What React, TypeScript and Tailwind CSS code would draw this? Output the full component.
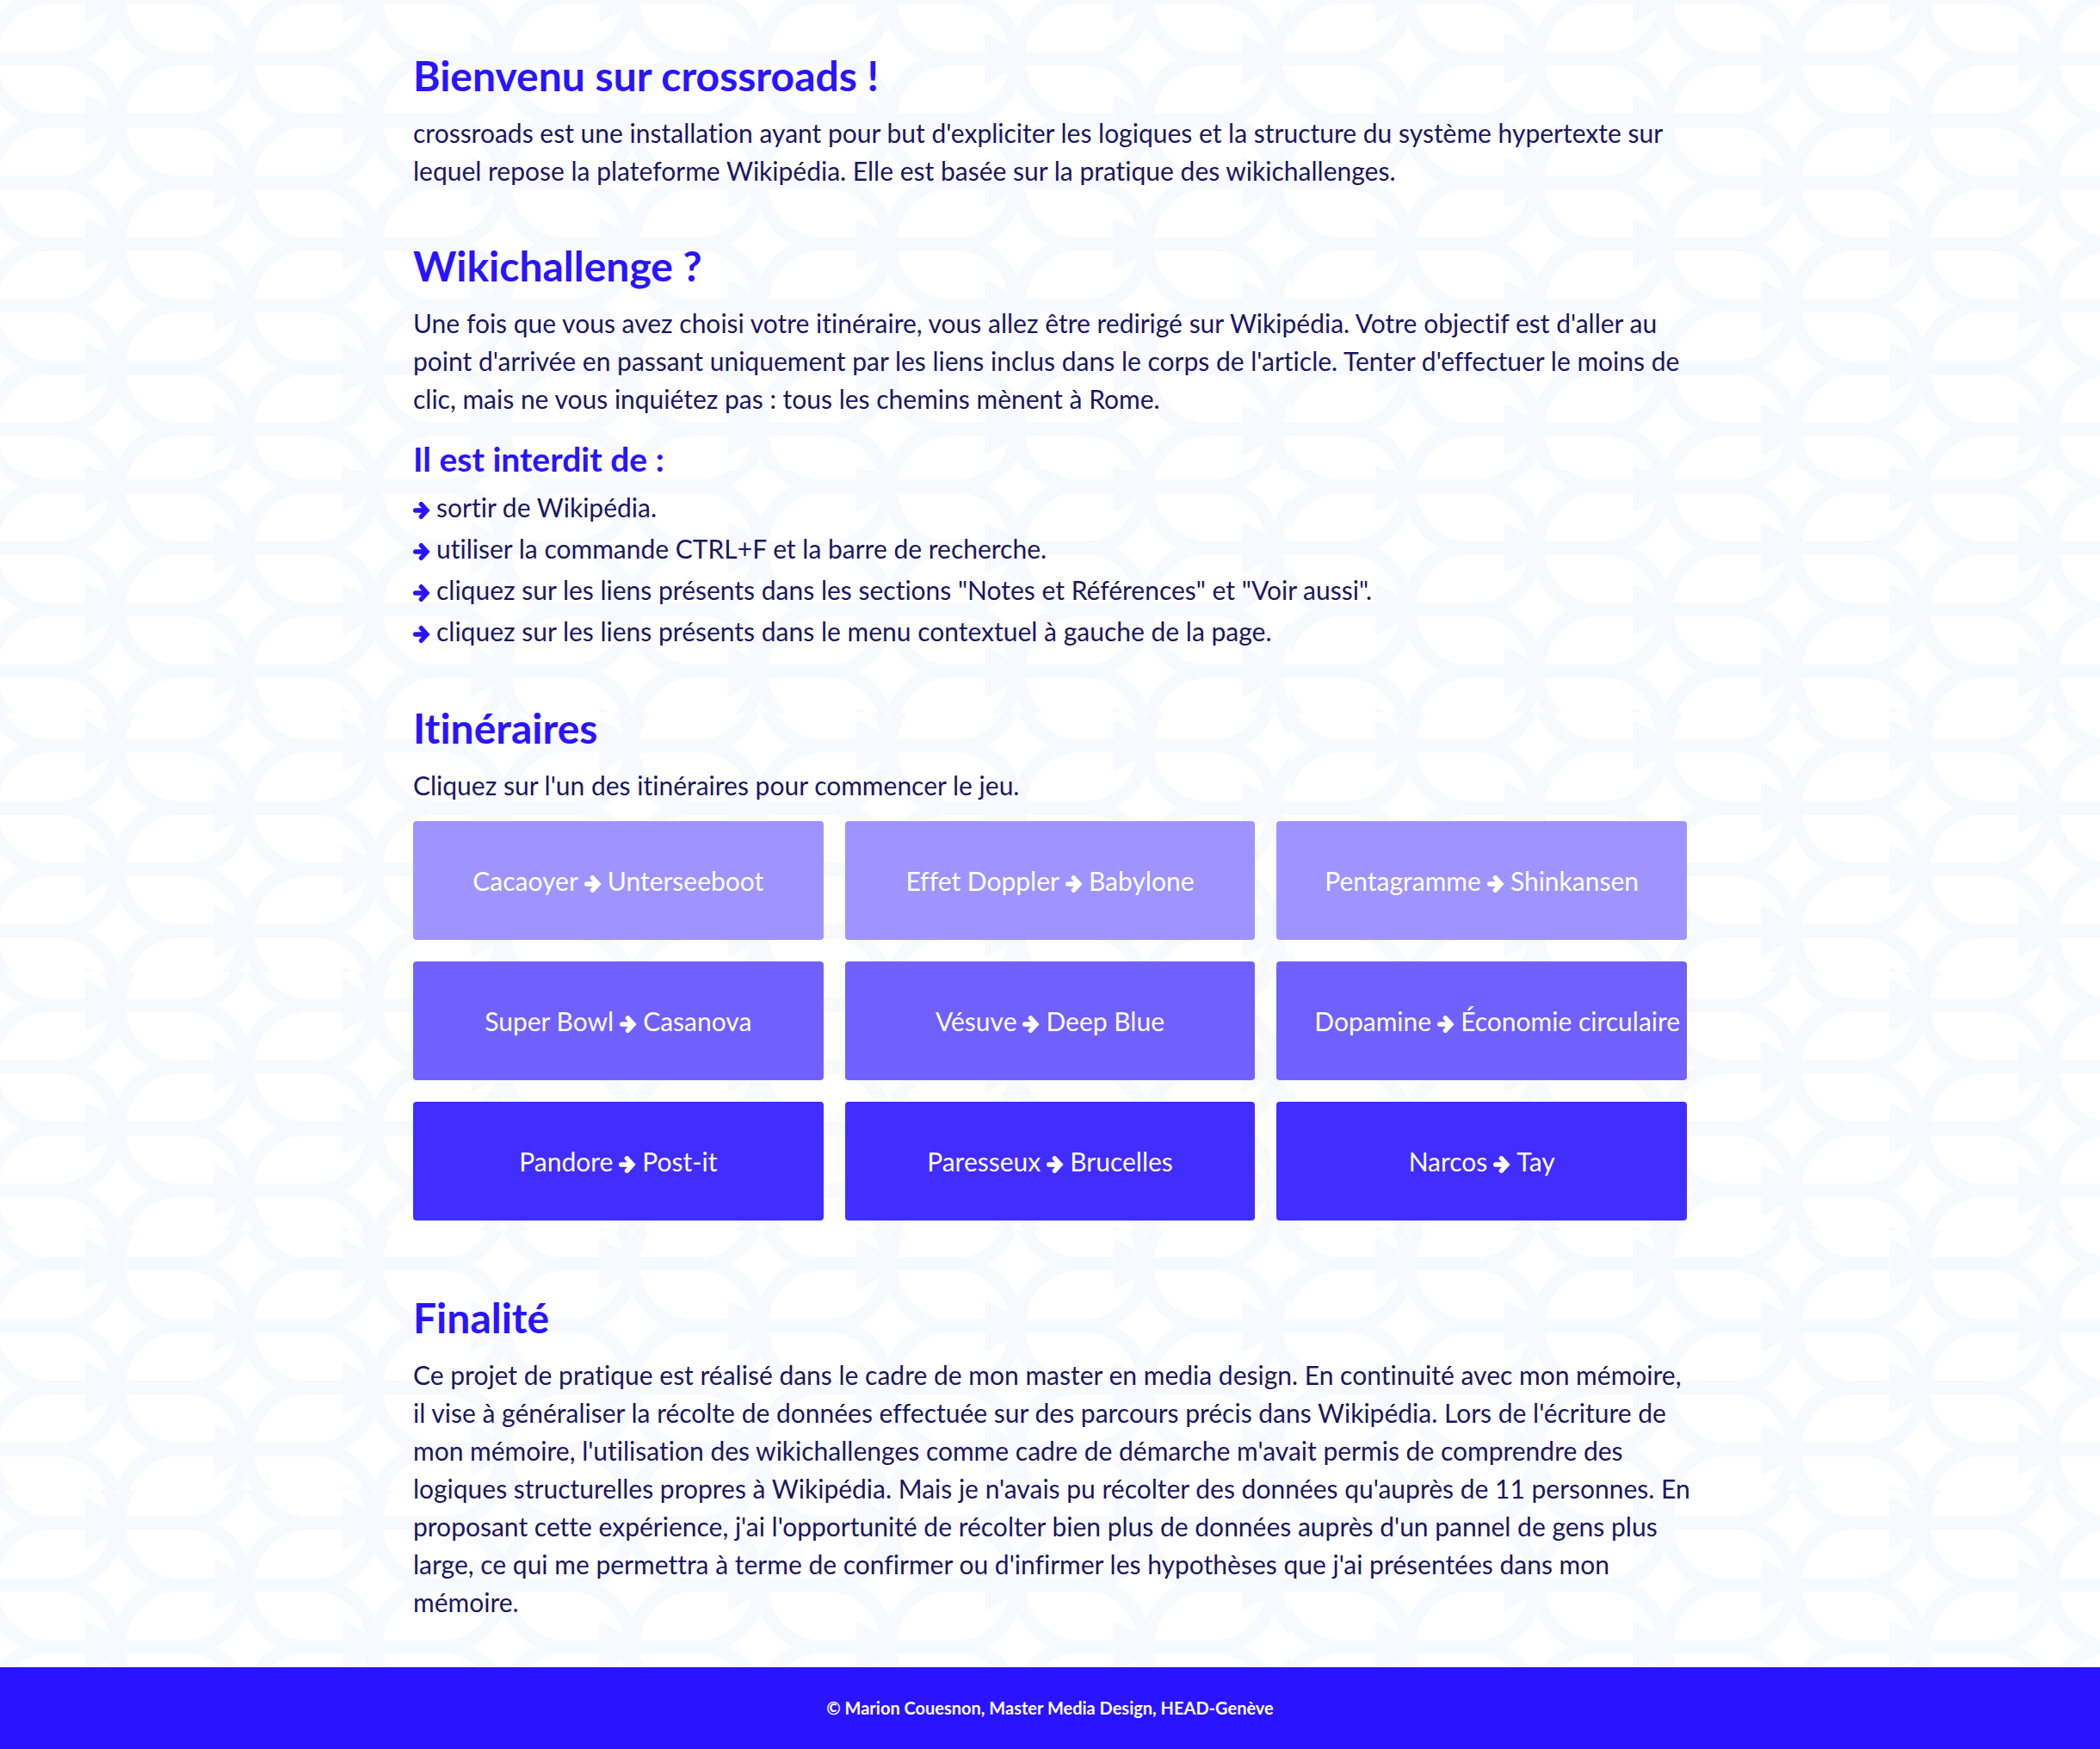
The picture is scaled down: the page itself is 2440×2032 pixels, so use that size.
import React from "react";

const UNIT_W = 298.67;
const UNIT_H = 143.6;

function Junction({ x, y }: { x: number; y: number }) {
  return (
    <g transform={`translate(${x} ${y})`}>
      <path
        fill="none"
        stroke="#f8f9ff"
        strokeWidth={16}
        d="M-80 0H80M1 0A70 72 0 0 1 71 -72M1 0A70 72 0 0 0 71 72M-1 0A70 72 0 0 0 -71 -72M-1 0A70 72 0 0 1 -71 72"
      />
      <path fill="#f8f9ff" d="M-38 -27Q-38 -30 -35 -29L18 0L-35 29Q-38 30 -38 27Z" />
    </g>
  );
}

function RailPattern({ id, x, y }: { id: string; x: number; y: number }) {
  return (
    <pattern id={id} x={x} y={y} width={UNIT_W} height={UNIT_H} patternUnits="userSpaceOnUse">
      <Junction x={0} y={0} />
      <Junction x={UNIT_W} y={0} />
      <Junction x={0} y={UNIT_H} />
      <Junction x={UNIT_W} y={UNIT_H} />
      <Junction x={UNIT_W / 2} y={UNIT_H / 2} />
    </pattern>
  );
}

const bands = [
  { top: 0, height: 546, origin: 140 },
  { top: 546, height: 282, origin: 564.7 },
  { top: 828, height: 301, origin: 866.6 },
  { top: 1129, height: 301, origin: 1167.6 },
  { top: 1430, height: 301, origin: 1468.6 },
  { top: 1731, height: 301, origin: 1769.6 },
];

function Background() {
  return (
    <svg className="absolute inset-0 h-full w-full" aria-hidden="true">
      <defs>
        {bands.map((b, i) => (
          <React.Fragment key={i}>
            <RailPattern id={`rail-a${i}`} x={137} y={b.origin} />
            <RailPattern id={`rail-b${i}`} x={143} y={b.origin} />
          </React.Fragment>
        ))}
      </defs>
      {bands.map((b, i) => (
        <React.Fragment key={i}>
          <rect x={0} y={b.top} width={1499} height={b.height} fill={`url(#rail-a${i})`} />
          <rect x={1499} y={b.top} width="100%" height={b.height} fill={`url(#rail-b${i})`} />
        </React.Fragment>
      ))}
    </svg>
  );
}

function Arrow() {
  return (
    <svg
      viewBox="0 0 20 20"
      className="inline-block h-5 w-5 align-[-2px]"
      fill="none"
      stroke="currentColor"
      strokeWidth={5.4}
      strokeLinecap="round"
      aria-hidden="true"
    >
      <path d="M2.7 10H14M9.4 2.7L16 10L9.4 17.3" />
    </svg>
  );
}

function Title({ children }: { children: React.ReactNode }) {
  return <h2 className="mb-[14px] text-[48px] leading-[60px] font-bold text-[#2a14ff]">{children}</h2>;
}

const rules = [
  "sortir de Wikipédia.",
  "utiliser la commande CTRL+F et la barre de recherche.",
  'cliquez sur les liens présents dans les sections "Notes et Références" et "Voir aussi".',
  "cliquez sur les liens présents dans le menu contextuel à gauche de la page.",
];

const routes = [
  { from: "Cacaoyer", to: "Unterseeboot", color: "bg-[#9f94ff]" },
  { from: "Effet Doppler", to: "Babylone", color: "bg-[#9f94ff]" },
  { from: "Pentagramme", to: "Shinkansen", color: "bg-[#9f94ff]" },
  { from: "Super Bowl", to: "Casanova", color: "bg-[#7061ff]" },
  { from: "Vésuve", to: "Deep Blue", color: "bg-[#7061ff]" },
  { from: "Dopamine", to: "Économie circulaire", color: "bg-[#7061ff]" },
  { from: "Pandore", to: "Post-it", color: "bg-[#412dff]" },
  { from: "Paresseux", to: "Brucelles", color: "bg-[#412dff]" },
  { from: "Narcos", to: "Tay", color: "bg-[#412dff]" },
];

export default function App() {
  return (
    <div className="relative flex min-h-screen flex-col bg-white font-['Lato','Liberation_Sans',sans-serif] text-[30px] leading-[44px] text-[#1b1760] [font-variant-ligatures:none]">
      <Background />
      <main className="relative mx-auto w-full max-w-[1480px] grow pt-[58px] pb-[54px]">
        <section className="mb-[59px]">
          <Title>Bienvenu sur crossroads !</Title>
          <p>
            crossroads est une installation ayant pour but d'expliciter les logiques et la structure du système hypertexte sur
            lequel repose la plateforme Wikipédia. Elle est basée sur la pratique des wikichallenges.
          </p>
        </section>
        <section className="mb-[61px]">
          <Title>Wikichallenge ?</Title>
          <p>
            Une fois que vous avez choisi votre itinéraire, vous allez être redirigé sur Wikipédia. Votre objectif est d'aller au
            <br />
            point d'arrivée en passant uniquement par les liens inclus dans le corps de l'article. Tenter d'effectuer le moins de
            clic, mais ne vous inquiétez pas : tous les chemins mènent à Rome.
          </p>
          <h3 className="mt-6 mb-[10px] text-[39px] leading-[48px] font-bold text-[#2a14ff]">Il est interdit de :</h3>
          <ul className="flex flex-col gap-1">
            {rules.map((rule) => (
              <li key={rule}>
                <span className="mr-[7px] text-[#2a14ff]">
                  <Arrow />
                </span>
                {rule}
              </li>
            ))}
          </ul>
        </section>
        <section className="mb-[83px]">
          <Title>Itinéraires</Title>
          <p>Cliquez sur l'un des itinéraires pour commencer le jeu.</p>
          <nav className="mt-5 grid grid-cols-3 gap-[25px]">
            {routes.map((r) => (
              <a
                key={r.from}
                href="#"
                className={`block rounded-[4px] px-11 py-[47px] text-center whitespace-nowrap text-white ${r.color}`}
              >
                {r.from}
                <span className="mx-[7px]">
                  <Arrow />
                </span>
                {r.to}
              </a>
            ))}
          </nav>
        </section>
        <section>
          <Title>Finalité</Title>
          <p className="xl:whitespace-nowrap">
            Ce projet de pratique est réalisé dans le cadre de mon master en media design. En continuité avec mon mémoire,
            <br />
            il vise à généraliser la récolte de données effectuée sur des parcours précis dans Wikipédia. Lors de l'écriture de
            <br />
            mon mémoire, l'utilisation des wikichallenges comme cadre de démarche m'avait permis de comprendre des
            <br />
            logiques structurelles propres à Wikipédia. Mais je n'avais pu récolter des données qu'auprès de 11 personnes. En
            <br />
            proposant cette expérience, j'ai l'opportunité de récolter bien plus de données auprès d'un pannel de gens plus
            <br />
            large, ce qui me permettra à terme de confirmer ou d'infirmer les hypothèses que j'ai présentées dans mon
            <br />
            mémoire.
          </p>
        </section>
      </main>
      <footer className="relative bg-[#2a14ff] py-8 text-center text-[20px] leading-[31px] font-bold text-white">
        © Marion Couesnon, Master Media Design, HEAD-Genève
      </footer>
    </div>
  );
}
